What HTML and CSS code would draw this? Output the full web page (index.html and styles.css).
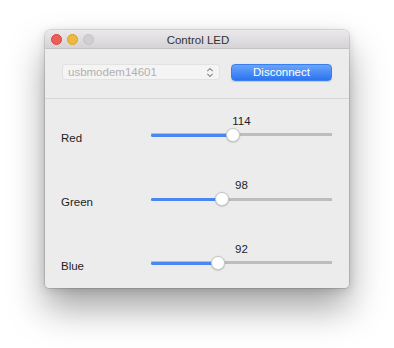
FILE: index.html
```html
<!DOCTYPE html>
<html>
<head>
<meta charset="utf-8">
<link rel="stylesheet" href="styles.css">
</head>
<body>
<div class="window">
  <div class="titlebar">
    <div class="lights">
      <span class="light red"></span>
      <span class="light yellow"></span>
      <span class="light gray"></span>
    </div>
    <div class="title">Control LED</div>
  </div>
  <div class="top">
    <div class="popup">
      <span class="popup-text">usbmodem14601</span>
      <svg class="chev" width="8" height="11" viewBox="0 0 8 11"><path d="M1.3 4.2 L4 1.5 L6.7 4.2 M1.3 6.8 L4 9.5 L6.7 6.8" fill="none" stroke="#8a8a8a" stroke-width="1.1"/></svg>
    </div>
    <button class="btn">Disconnect</button>
  </div>
  <div class="sliders">
    <div class="row">
      <div class="label">Red</div>
      <div class="slider">
        <div class="value">114</div>
        <div class="track"><div class="fill" style="width:81.7px"></div><div class="thumb" style="left:74.7px"></div></div>
      </div>
    </div>
    <div class="row">
      <div class="label">Green</div>
      <div class="slider">
        <div class="value">98</div>
        <div class="track"><div class="fill" style="width:71.2px"></div><div class="thumb" style="left:64.2px"></div></div>
      </div>
    </div>
    <div class="row">
      <div class="label">Blue</div>
      <div class="slider">
        <div class="value">92</div>
        <div class="track"><div class="fill" style="width:67.3px"></div><div class="thumb" style="left:60.3px"></div></div>
      </div>
    </div>
  </div>
</div>
</body>
</html>
```
FILE: styles.css
```css
html, body {
  margin: 0;
  padding: 0;
  background: #ffffff;
}
body {
  min-height: 348px;
  box-sizing: border-box;
  padding: 30px 0 0 45px;
  font-family: "Liberation Sans", Arial, sans-serif;
  font-size: 11.5px;
  color: #1e1e1e;
}
.window {
  width: 304px;
  height: 258px;
  background: #ececec;
  border-radius: 5px 5px 4px 4px;
  box-shadow: 0 0 0 0.5px rgba(0,0,0,0.22), 0 20px 36px rgba(0,0,0,0.36), 0 2px 10px rgba(0,0,0,0.14);
  display: flex;
  flex-direction: column;
  overflow: hidden;
}
.titlebar {
  height: 18px;
  flex: none;
  background: linear-gradient(#ebe9eb, #d5d3d5);
  border-bottom: 1px solid #c6c4c6;
  position: relative;
  display: flex;
  align-items: center;
  justify-content: center;
}
.lights {
  position: absolute;
  left: 6px;
  top: 4px;
  display: flex;
  gap: 5px;
}
.light {
  width: 11px;
  height: 11px;
  border-radius: 50%;
  box-sizing: border-box;
}
.red { background: #ec5e57; border: 0.5px solid #d6483f; }
.yellow { background: #ecbb3c; border: 0.5px solid #d4a030; }
.gray { background: #d0d0d0; border: 0.5px solid #c2c2c2; }
.title {
  font-size: 11.5px;
  color: #333333;
  margin-left: 2px;
  margin-top: 1px;
}
.top {
  height: 50px;
  flex: none;
  border-bottom: 1px solid #d6d6d6;
  display: flex;
  align-items: flex-start;
  padding: 15px 17px 0 17px;
  box-sizing: border-box;
  gap: 11px;
}
.popup {
  width: 158px;
  height: 16px;
  box-sizing: border-box;
  background: #f4f4f4;
  border: 1px solid #e2e2e2;
  border-radius: 3px;
  display: flex;
  align-items: center;
  justify-content: space-between;
  padding: 0 5px 0 5px;
}
.popup-text {
  color: #b0b0b0;
  font-size: 11.5px;
}
.chev { display: block; }
.btn {
  width: 101px;
  height: 17px;
  margin: 0;
  padding: 0;
  border: 1px solid #3a7ef2;
  border-radius: 4px;
  background: linear-gradient(#69a5fb, #2c74f0);
  color: #ffffff;
  font-family: inherit;
  font-size: 11.5px;
  line-height: 15px;
  box-shadow: 0 0.5px 1px rgba(0,0,0,0.15);
}
.sliders {
  padding: 15px 17px 0 16px;
  display: flex;
  flex-direction: column;
  gap: 36px;
}
.row {
  display: flex;
  align-items: flex-end;
}
.label {
  width: 90px;
  line-height: 14px;
  margin-bottom: -3px;
}
.slider {
  width: 181px;
  display: flex;
  flex-direction: column;
}
.value {
  text-align: center;
  line-height: 14px;
  height: 14px;
}
.track {
  position: relative;
  height: 14px;
  background: linear-gradient(transparent 5.5px, #bdbdbd 5.5px, #bdbdbd 8.5px, transparent 8.5px);
}
.fill {
  position: absolute;
  left: 0;
  top: 5.5px;
  height: 3px;
  border-radius: 1.5px;
  background: #4a87ee;
}
.thumb {
  position: absolute;
  top: 0;
  width: 14px;
  height: 14px;
  box-sizing: border-box;
  border-radius: 50%;
  background: #ffffff;
  border: 0.5px solid #c8c8c8;
  box-shadow: 0 0.5px 1.5px rgba(0,0,0,0.25);
}
```
